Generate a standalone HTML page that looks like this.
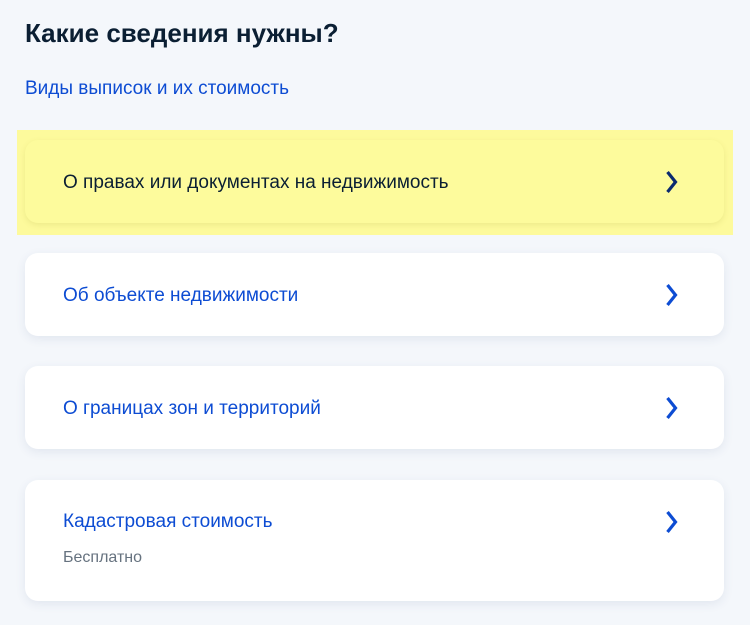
<!DOCTYPE html>
<html><head><meta charset="utf-8"><style>
body{margin:0;width:750px;height:625px;background:#f4f7fb;font-family:"Liberation Sans","Noto Sans CJK SC",sans-serif;position:relative;overflow:hidden}
h1{position:absolute;left:25px;top:18px;margin:0;font-size:26px;font-weight:bold;color:#0b1f33}
.sub{position:absolute;left:25px;top:78px;font-size:19px;color:#0d4cd3}
.hl{position:absolute;left:17px;top:130px;width:716px;height:105px;background:#fdfa9c}
.card{position:absolute;left:25px;width:699px;background:#fff;border-radius:13px;box-shadow:0 3px 10px rgba(40,70,120,0.09)}
.card .t{position:absolute;left:38px;font-size:19px;color:#0d4cd3}
.card svg{position:absolute;left:637px;display:block}
.y{background:#fdfb9c;box-shadow:0 2px 6px rgba(150,150,40,0.15)}
.y .t{color:#0b1f33}
</style></head><body>
<h1>Какие сведения нужны?</h1>
<div class="sub">Виды выписок и их стоимость</div>
<div class="hl"></div>
<div class="card y" style="top:140px;height:83px"><div class="t" style="top:32px">О правах или документах на недвижимость</div><svg style="top:29px" width="20" height="26" viewBox="0 0 20 26"><path d="M5.5 3l8 10-8 10" fill="none" stroke="#0b2a6f" stroke-width="3.2"/></svg></div>
<div class="card" style="top:253px;height:83px"><div class="t" style="top:32px">Об объекте недвижимости</div><svg style="top:29px" width="20" height="26" viewBox="0 0 20 26"><path d="M5.5 3l8 10-8 10" fill="none" stroke="#0d4cd3" stroke-width="3.2"/></svg></div>
<div class="card" style="top:366px;height:83px"><div class="t" style="top:32px">О границах зон и территорий</div><svg style="top:29px" width="20" height="26" viewBox="0 0 20 26"><path d="M5.5 3l8 10-8 10" fill="none" stroke="#0d4cd3" stroke-width="3.2"/></svg></div>
<div class="card" style="top:480px;height:121px"><div class="t" style="top:31px">Кадастровая стоимость</div><div style="position:absolute;left:38px;top:69px;font-size:16px;color:#66727f">Бесплатно</div><svg style="top:29px" width="20" height="26" viewBox="0 0 20 26"><path d="M5.5 3l8 10-8 10" fill="none" stroke="#0d4cd3" stroke-width="3.2"/></svg></div>
</body></html>
